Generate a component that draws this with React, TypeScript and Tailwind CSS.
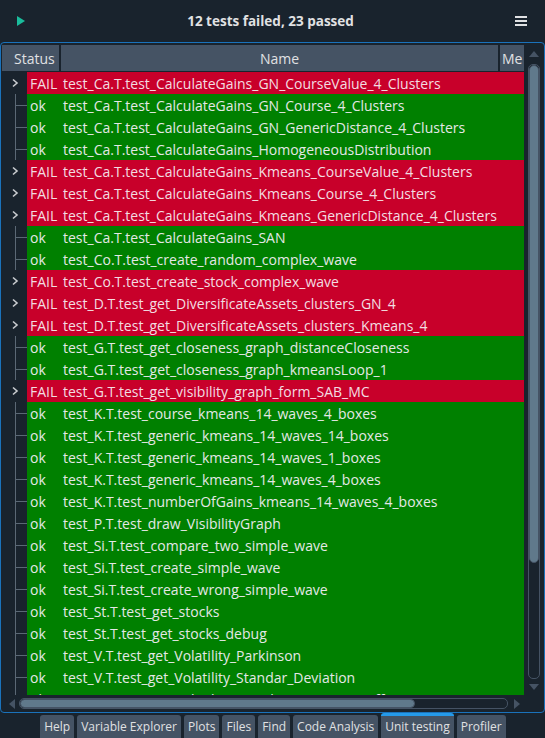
import React from 'react';

type Row = { ok: boolean; name: string };

const rows: Row[] = [
  { ok: false, name: 'test_Ca.T.test_CalculateGains_GN_CourseValue_4_Clusters' },
  { ok: true, name: 'test_Ca.T.test_CalculateGains_GN_Course_4_Clusters' },
  { ok: true, name: 'test_Ca.T.test_CalculateGains_GN_GenericDistance_4_Clusters' },
  { ok: true, name: 'test_Ca.T.test_CalculateGains_HomogeneousDistribution' },
  { ok: false, name: 'test_Ca.T.test_CalculateGains_Kmeans_CourseValue_4_Clusters' },
  { ok: false, name: 'test_Ca.T.test_CalculateGains_Kmeans_Course_4_Clusters' },
  { ok: false, name: 'test_Ca.T.test_CalculateGains_Kmeans_GenericDistance_4_Clusters' },
  { ok: true, name: 'test_Ca.T.test_CalculateGains_SAN' },
  { ok: true, name: 'test_Co.T.test_create_random_complex_wave' },
  { ok: false, name: 'test_Co.T.test_create_stock_complex_wave' },
  { ok: false, name: 'test_D.T.test_get_DiversificateAssets_clusters_GN_4' },
  { ok: false, name: 'test_D.T.test_get_DiversificateAssets_clusters_Kmeans_4' },
  { ok: true, name: 'test_G.T.test_get_closeness_graph_distanceCloseness' },
  { ok: true, name: 'test_G.T.test_get_closeness_graph_kmeansLoop_1' },
  { ok: false, name: 'test_G.T.test_get_visibility_graph_form_SAB_MC' },
  { ok: true, name: 'test_K.T.test_course_kmeans_14_waves_4_boxes' },
  { ok: true, name: 'test_K.T.test_generic_kmeans_14_waves_14_boxes' },
  { ok: true, name: 'test_K.T.test_generic_kmeans_14_waves_1_boxes' },
  { ok: true, name: 'test_K.T.test_generic_kmeans_14_waves_4_boxes' },
  { ok: true, name: 'test_K.T.test_numberOfGains_kmeans_14_waves_4_boxes' },
  { ok: true, name: 'test_P.T.test_draw_VisibilityGraph' },
  { ok: true, name: 'test_Si.T.test_compare_two_simple_wave' },
  { ok: true, name: 'test_Si.T.test_create_simple_wave' },
  { ok: true, name: 'test_Si.T.test_create_wrong_simple_wave' },
  { ok: true, name: 'test_St.T.test_get_stocks' },
  { ok: true, name: 'test_St.T.test_get_stocks_debug' },
  { ok: true, name: 'test_V.T.test_get_Volatility_Parkinson' },
  { ok: true, name: 'test_V.T.test_get_Volatility_Standar_Deviation' },
  { ok: true, name: 'test_V.T.test_get_Volatility_Standar_Deviation_Diff' },
];

const tabs = ['Help', 'Variable Explorer', 'Plots', 'Files', 'Find', 'Code Analysis', 'Unit testing', 'Profiler'];

const TestRow: React.FC<{ row: Row }> = ({ row }) => (
  <div className="flex h-[22px] shrink-0">
    {/* tree branch area */}
    <div className="w-[25px] shrink-0 relative">
      {row.ok ? (
        <>
          <div className="absolute left-[13px] top-0 bottom-0 w-[1px] bg-[#5b6875]" />
          <div className="absolute left-[13px] top-[11px] w-[12px] h-[1px] bg-[#5b6875]" />
        </>
      ) : (
        <svg className="absolute left-[9px] top-[6px]" width="8" height="10" viewBox="0 0 8 10">
          <path d="M2 1.5 L6 5 L2 8.5" fill="none" stroke="#c9ccd0" strokeWidth="1.6" />
        </svg>
      )}
    </div>
    <div
      className={`flex-1 flex items-center text-[14px] whitespace-nowrap overflow-hidden ${
        row.ok ? 'bg-[#008000] text-[#e4e8e6]' : 'bg-[#c8002a] text-[#f3dde1]'
      }`}
    >
      <span className="w-[36px] pl-[3px] shrink-0">{row.ok ? 'ok' : 'FAIL'}</span>
      <span>{row.name}</span>
    </div>
  </div>
);

export default function App() {
  return (
    <div
      className="w-[545px] h-[738px] bg-[#19232d] flex flex-col overflow-hidden text-[#e0e1e3]"
      style={{ fontFamily: '"Open Sans", "Noto Sans", sans-serif' }}
    >
      {/* top toolbar */}
      <div className="h-[42px] shrink-0 flex items-center px-[17px]">
        <svg width="8" height="10" viewBox="0 0 8 10">
          <path d="M0 0 L8 5 L0 10 Z" fill="#1abc9c" />
        </svg>
        <div className="flex-1 text-center text-[13.5px] font-bold pl-[1px]">12 tests failed, 23 passed</div>
        <div className="flex flex-col gap-[2px] mr-[1px]">
          <div className="w-[12px] h-[2px] bg-[#e0e1e3]" />
          <div className="w-[12px] h-[2px] bg-[#e0e1e3]" />
          <div className="w-[12px] h-[2px] bg-[#e0e1e3]" />
        </div>
      </div>

      {/* results panel */}
      <div className="h-[671px] shrink-0 border border-[#1a72bb] rounded-[4px] flex flex-col pt-[2px] pl-[1px]">
        <div className="flex flex-1 min-h-0">
          {/* tree */}
          <div className="flex-1 flex flex-col min-w-0">
            <div className="h-[26px] shrink-0 flex gap-[2px] text-[14px]">
              <div className="w-[57px] bg-[#455364] flex items-center pl-[12px]">Status</div>
              <div className="flex-1 bg-[#455364] flex items-center justify-center">Name</div>
              <div className="w-[24px] bg-[#455364] flex items-center pl-[2px] overflow-hidden">Me</div>
            </div>
            <div className="flex-1 min-h-0 overflow-hidden mt-[1px] flex flex-col">
              {rows.map((r) => (
                <TestRow key={r.name} row={r} />
              ))}
            </div>
          </div>
          {/* vertical scrollbar */}
          <div className="w-[20px] shrink-0 flex flex-col items-center pt-[6px] pb-[5px]">
            <svg width="10" height="6" viewBox="0 0 10 6" className="mb-[7px]">
              <path d="M0 6 L5 0 L10 6 Z" fill="#455364" />
            </svg>
            <div className="flex-1 w-[12px] rounded-[5px] border border-[#455364] flex flex-col">
              <div className="h-[498px] rounded-[5px] bg-[#60798b] border border-[#455364]" />
            </div>
            <svg width="10" height="6" viewBox="0 0 10 6" className="mt-[5px]">
              <path d="M0 0 L5 6 L10 0 Z" fill="#455364" />
            </svg>
          </div>
        </div>
        {/* horizontal scrollbar */}
        <div className="h-[17px] shrink-0 flex items-center pl-[7px] pr-[24px]">
          <svg width="6" height="10" viewBox="0 0 6 10" className="mr-[4px]">
            <path d="M6 0 L0 5 L6 10 Z" fill="#455364" />
          </svg>
          <div className="flex-1 h-[11px] rounded-[5px] border border-[#455364] flex">
            <div className="w-[395px] rounded-[5px] bg-[#60798b] border border-[#455364]" />
          </div>
          <svg width="6" height="10" viewBox="0 0 6 10" className="ml-[6px]">
            <path d="M0 0 L6 5 L0 10 Z" fill="#455364" />
          </svg>
        </div>
      </div>

      {/* bottom tabs */}
      <div className="flex-1 flex justify-center items-end gap-[3px] pl-[1px]">
        {tabs.map((t) => (
          <div
            key={t}
            className={`px-[4px] flex items-center text-[12px] bg-[#455364] rounded-t-[3px] ${
              t === 'Unit testing' ? 'border-t-[3px] border-[#259ae9] h-[25px] pb-[1px]' : 'h-[23px]'
            }`}
          >
            {t}
          </div>
        ))}
      </div>
    </div>
  );
}
